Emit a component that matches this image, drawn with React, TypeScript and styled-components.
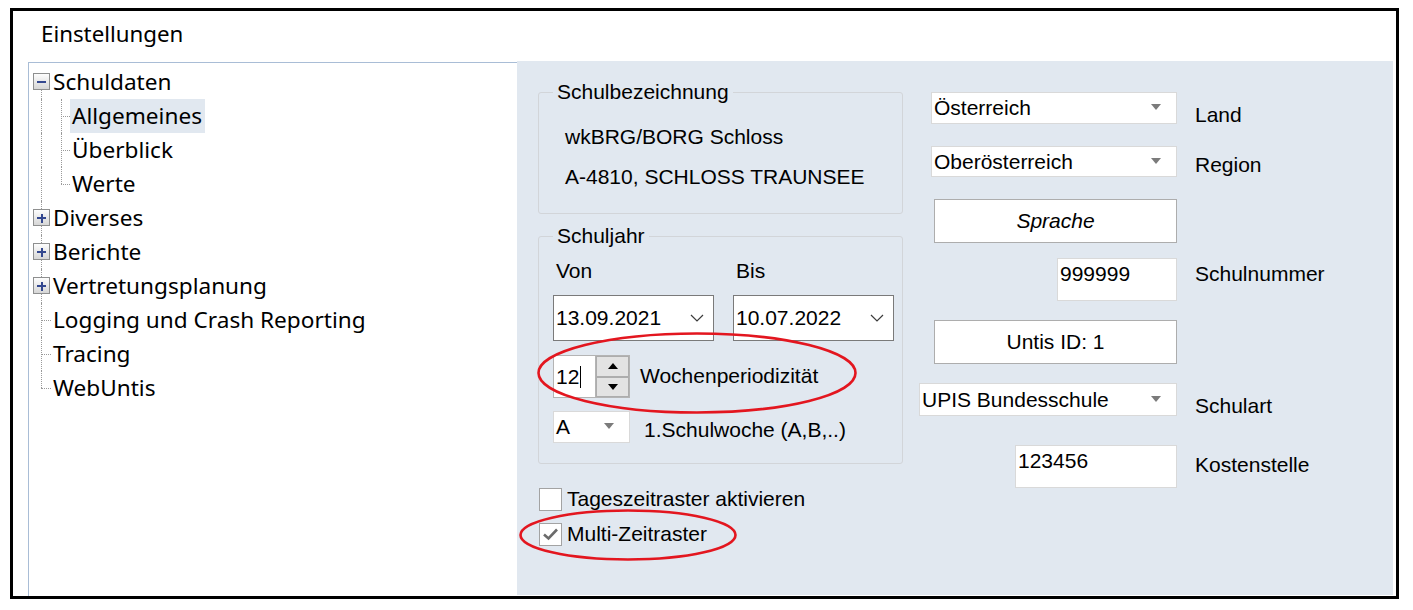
import React from "react";
import styled, { createGlobalStyle } from "styled-components";

const GlobalStyle = createGlobalStyle`
  html, body { margin: 0; padding: 0; background: #fff; }
  body { font-family: "Liberation Sans", Arial, sans-serif; }
`;

const Frame = styled.div`
  box-sizing: border-box;
  margin: 8px 0 0 10px;
  width: 1389px;
  height: 591px;
  border: 3px solid #000;
  display: flex;
  flex-direction: column;
  background: #fff;
`;

const Header = styled.div`
  height: 50px;
  padding: 11px 0 0 28px;
  box-sizing: border-box;
  font-family: "Noto Sans", sans-serif;
  font-size: 22.3px;
  line-height: 24px;
  color: #000;
`;

const Body = styled.div`
  flex: 1;
  display: flex;
  padding-left: 15px;
  min-height: 0;
`;

/* ---------- Tree ---------- */
const Tree = styled.ul`
  list-style: none;
  margin: 1px 0 0 0;
  padding: 2px 0 0 0;
  width: 489px;
  box-sizing: border-box;
  border-left: 1px solid #a9bdd6;
  border-top: 1px solid #a9bdd6;
  font-family: "Noto Sans", sans-serif;
  font-size: 22.6px;
  color: #000;
`;

const TreeRow = styled.li`
  display: flex;
  height: 34px;
  align-items: stretch;
`;

const Guide = styled.span<{ $w: number; $x: number; $top?: boolean; $bottom?: boolean; $stub?: boolean }>`
  position: relative;
  flex: none;
  width: ${(p) => p.$w}px;
  display: flex;
  align-items: center;
  &::before {
    content: "";
    position: absolute;
    left: ${(p) => p.$x}px;
    top: ${(p) => (p.$top ? "0" : "17px")};
    bottom: ${(p) => (p.$bottom ? "0" : "17px")};
    border-left: 1px dotted #9a9a9a;
    display: ${(p) => (p.$top || p.$bottom ? "block" : "none")};
  }
  &::after {
    content: "";
    position: absolute;
    left: ${(p) => p.$x}px;
    right: 0;
    top: 17px;
    border-top: 1px dotted #9a9a9a;
    display: ${(p) => (p.$stub ? "block" : "none")};
  }
`;

const Expander = styled.span<{ $open?: boolean }>`
  position: relative;
  z-index: 1;
  box-sizing: border-box;
  width: 17px;
  height: 17px;
  margin-left: 4px;
  margin-top: -1px;
  border: 1px solid #8e8f8f;
  background: linear-gradient(#fdfdfd, #d6d6d6);
  display: flex;
  align-items: center;
  justify-content: center;
  &::before {
    content: "";
    width: 9px;
    height: 2px;
    background: #34488f;
  }
  &::after {
    content: "";
    position: absolute;
    left: 6.5px;
    top: 3.5px;
    width: 2px;
    height: 9px;
    background: #34488f;
    display: ${(p) => (p.$open ? "none" : "block")};
  }
`;

const NodeLabel = styled.span<{ $selected?: boolean }>`
  padding: 0 3px 0 2px;
  line-height: 34px;
  white-space: nowrap;
  background: ${(p) => (p.$selected ? "#e1e8f0" : "transparent")};
`;

/* ---------- Panel ---------- */
const Panel = styled.div`
  position: relative;
  flex: 1;
  margin: 0 3px 1px 0;
  background: #e1e8f0;
  display: flex;
  gap: 16px;
  padding: 20px 0 0 21px;
  font-family: "Liberation Sans", Arial, sans-serif;
  font-size: 21px;
  color: #000;
`;

const LeftCol = styled.div`
  width: 365px;
  display: flex;
  flex-direction: column;
`;

const Group = styled.fieldset<{ $mt?: number }>`
  margin: ${(p) => p.$mt ?? 0}px 0 0 0;
  padding: 0;
  border: 1px solid #d2d5d9;
  border-radius: 3px;
  min-width: 0;
`;

const Legend = styled.legend`
  margin-left: 14px;
  padding: 0 4px;
  line-height: 22px;
`;

const NameBlock = styled.div`
  padding: 14px 0 16px 26px;
`;

const NameLine = styled.div`
  line-height: 40px;
  white-space: nowrap;
`;

const YearBlock = styled.div`
  padding: 12px 9px 20px 14px;
  display: flex;
  flex-direction: column;
`;

const PairGrid = styled.div<{ $mt?: number }>`
  display: grid;
  grid-template-columns: 161px 161px;
  column-gap: 19px;
  margin-top: ${(p) => p.$mt ?? 0}px;
`;

const SmallLabel = styled.div`
  padding-left: 3px;
  line-height: 24px;
`;

const DateBox = styled.div`
  box-sizing: border-box;
  height: 46px;
  border: 1px solid #7a7a7a;
  background: #fff;
  display: flex;
  align-items: center;
  justify-content: space-between;
  padding: 0 9px 0 2px;
`;

const InlineRow = styled.div<{ $mt?: number; $gap: number }>`
  display: flex;
  align-items: center;
  gap: ${(p) => p.$gap}px;
  margin-top: ${(p) => p.$mt ?? 0}px;
  white-space: nowrap;
`;

const RowText = styled.span<{ $dy: number }>`
  position: relative;
  top: ${(p) => p.$dy}px;
`;

const Spinner = styled.div`
  box-sizing: border-box;
  width: 77px;
  height: 43px;
  display: flex;
  border: 1px solid #b4b4b4;
  background: #fff;
`;

const SpinInput = styled.div`
  flex: 1;
  display: flex;
  align-items: center;
  padding-left: 2px;
  line-height: 24px;
`;

const Caret = styled.span`
  display: inline-block;
  width: 1px;
  height: 22px;
  margin-left: 1px;
  background: #000;
`;

const SpinButtons = styled.div`
  width: 33px;
  display: flex;
  flex-direction: column;
  border-left: 1px solid #b4b4b4;
`;

const SpinButton = styled.div<{ $down?: boolean }>`
  flex: 1;
  box-sizing: border-box;
  border: 1px solid #adadad;
  background: #e3e3e3;
  display: flex;
  align-items: center;
  justify-content: center;
  &::before {
    content: "";
    border-left: 5px solid transparent;
    border-right: 5px solid transparent;
    ${(p) => (p.$down ? "border-top: 6px solid #000;" : "border-bottom: 6px solid #000;")}
  }
`;

const Combo = styled.div<{ $w: number; $h: number }>`
  box-sizing: border-box;
  width: ${(p) => p.$w}px;
  height: ${(p) => p.$h}px;
  border: 1px solid #d9d9d9;
  background: #fff;
  display: flex;
  align-items: center;
  justify-content: space-between;
  padding: 0 15px 0 2px;
  white-space: nowrap;
  &::after {
    content: "";
    border-left: 5px solid transparent;
    border-right: 5px solid transparent;
    border-top: 6px solid #7b7b7b;
    margin-top: -2px;
  }
`;

const CheckRow = styled.label<{ $mt: number }>`
  display: flex;
  align-items: center;
  gap: 5px;
  margin: ${(p) => p.$mt}px 0 0 1px;
  line-height: 24px;
  white-space: nowrap;
`;

const CheckBox = styled.span`
  box-sizing: border-box;
  width: 23px;
  height: 23px;
  border: 1px solid #a3a3a3;
  background: #fff;
  display: flex;
  align-items: center;
  justify-content: center;
`;

const RightCol = styled.div`
  margin-top: 11px;
  display: flex;
  flex-direction: column;
`;

const FormRow = styled.div<{ $mt: number; $h: number }>`
  display: flex;
  align-items: flex-start;
  height: ${(p) => p.$h}px;
  margin-top: ${(p) => p.$mt}px;
`;

const Slot = styled.div`
  width: 258px;
  display: flex;
  justify-content: flex-end;
`;

const SideLabel = styled.div<{ $pt: number }>`
  margin-left: 18px;
  line-height: 24px;
  padding-top: ${(p) => p.$pt}px;
  white-space: nowrap;
`;

const Button = styled.div<{ $italic?: boolean }>`
  box-sizing: border-box;
  width: 243px;
  height: 44px;
  border: 1px solid #adadad;
  background: #fff;
  display: flex;
  align-items: center;
  justify-content: center;
  font-style: ${(p) => (p.$italic ? "italic" : "normal")};
`;

const TextBox = styled.div<{ $w: number }>`
  box-sizing: border-box;
  width: ${(p) => p.$w}px;
  height: 43px;
  border: 1px solid #d9d9d9;
  background: #fff;
  padding: 3px 0 0 2px;
  line-height: 24px;
`;

const Annotation = styled.svg<{ $l: number; $t: number }>`
  position: absolute;
  left: ${(p) => p.$l}px;
  top: ${(p) => p.$t}px;
  overflow: visible;
  pointer-events: none;
`;

const Chevron = () => (
  <svg width="14" height="8" viewBox="0 0 14 8">
    <path d="M1 1 L7 7 L13 1" fill="none" stroke="#3c3c3c" strokeWidth="1.2" />
  </svg>
);

const Check = () => (
  <svg width="17" height="14" viewBox="0 0 17 14">
    <path d="M2 7.5 L6.5 11.5 L15 2.5" fill="none" stroke="#6b6b6b" strokeWidth="2.6" />
  </svg>
);

const Ellipse = ({ l, t, w, h }: { l: number; t: number; w: number; h: number }) => (
  <Annotation $l={l} $t={t} width={w} height={h} viewBox={`0 0 ${w} ${h}`}>
    <ellipse cx={w / 2} cy={h / 2} rx={w / 2 - 1.5} ry={h / 2 - 1.5} fill="none" stroke="#e3161f" strokeWidth="2.6" />
  </Annotation>
);

type RootItem = { label: string; expander?: "open" | "closed"; top: boolean; bottom: boolean };

const roots: RootItem[] = [
  { label: "Diverses", expander: "closed", top: true, bottom: true },
  { label: "Berichte", expander: "closed", top: true, bottom: true },
  { label: "Vertretungsplanung", expander: "closed", top: true, bottom: true },
  { label: "Logging und Crash Reporting", top: true, bottom: true },
  { label: "Tracing", top: true, bottom: true },
  { label: "WebUntis", top: true, bottom: false },
];

const children = ["Allgemeines", "Überblick", "Werte"];

export default function App() {
  return (
    <>
      <GlobalStyle />
      <Frame>
        <Header>Einstellungen</Header>
        <Body>
          <Tree>
            <TreeRow>
              <Guide $w={22} $x={12} $bottom>
                <Expander $open />
              </Guide>
              <NodeLabel>Schuldaten</NodeLabel>
            </TreeRow>
            {children.map((c, i) => (
              <TreeRow key={c}>
                <Guide $w={22} $x={12} $top $bottom />
                <Guide $w={19} $x={10} $top $bottom={i < children.length - 1} $stub />
                <NodeLabel $selected={i === 0}>{c}</NodeLabel>
              </TreeRow>
            ))}
            {roots.map((r) => (
              <TreeRow key={r.label}>
                <Guide $w={22} $x={12} $top={r.top} $bottom={r.bottom} $stub={!r.expander}>
                  {r.expander && <Expander $open={r.expander === "open"} />}
                </Guide>
                <NodeLabel>{r.label}</NodeLabel>
              </TreeRow>
            ))}
          </Tree>

          <Panel>
            <LeftCol>
              <Group>
                <Legend>Schulbezeichnung</Legend>
                <NameBlock>
                  <NameLine>wkBRG/BORG Schloss</NameLine>
                  <NameLine>A-4810, SCHLOSS TRAUNSEE</NameLine>
                </NameBlock>
              </Group>

              <Group $mt={11}>
                <Legend>Schuljahr</Legend>
                <YearBlock>
                  <PairGrid>
                    <SmallLabel>Von</SmallLabel>
                    <SmallLabel>Bis</SmallLabel>
                  </PairGrid>
                  <PairGrid $mt={12}>
                    <DateBox>
                      <span>13.09.2021</span>
                      <Chevron />
                    </DateBox>
                    <DateBox>
                      <span>10.07.2022</span>
                      <Chevron />
                    </DateBox>
                  </PairGrid>
                  <InlineRow $mt={14} $gap={10}>
                    <Spinner>
                      <SpinInput>
                        12
                        <Caret />
                      </SpinInput>
                      <SpinButtons>
                        <SpinButton />
                        <SpinButton $down />
                      </SpinButtons>
                    </Spinner>
                    <RowText $dy={-1}>Wochenperiodizität</RowText>
                  </InlineRow>
                  <InlineRow $mt={13} $gap={14}>
                    <Combo $w={77} $h={32}>A</Combo>
                    <RowText $dy={3}>1.Schulwoche (A,B,..)</RowText>
                  </InlineRow>
                </YearBlock>
              </Group>

              <CheckRow $mt={23}>
                <CheckBox />
                Tageszeitraster aktivieren
              </CheckRow>
              <CheckRow $mt={11}>
                <CheckBox>
                  <Check />
                </CheckBox>
                Multi-Zeitraster
              </CheckRow>
            </LeftCol>

            <RightCol>
              <FormRow $mt={0} $h={32}>
                <Slot>
                  <Combo $w={246} $h={32}>Österreich</Combo>
                </Slot>
                <SideLabel $pt={11}>Land</SideLabel>
              </FormRow>
              <FormRow $mt={22} $h={31}>
                <Slot>
                  <Combo $w={246} $h={31}>Oberösterreich</Combo>
                </Slot>
                <SideLabel $pt={7}>Region</SideLabel>
              </FormRow>
              <FormRow $mt={22} $h={44}>
                <Slot>
                  <Button $italic>Sprache</Button>
                </Slot>
              </FormRow>
              <FormRow $mt={15} $h={43}>
                <Slot>
                  <TextBox $w={120}>999999</TextBox>
                </Slot>
                <SideLabel $pt={4}>Schulnummer</SideLabel>
              </FormRow>
              <FormRow $mt={19} $h={43}>
                <Slot>
                  <Button>Untis ID: 1</Button>
                </Slot>
              </FormRow>
              <FormRow $mt={20} $h={33}>
                <Slot>
                  <Combo $w={258} $h={33}>UPIS Bundesschule</Combo>
                </Slot>
                <SideLabel $pt={11}>Schulart</SideLabel>
              </FormRow>
              <FormRow $mt={29} $h={43}>
                <Slot>
                  <TextBox $w={162}>123456</TextBox>
                </Slot>
                <SideLabel $pt={8}>Kostenstelle</SideLabel>
              </FormRow>
            </RightCol>

            <Ellipse l={20} t={271} w={320} h={82} />
            <Ellipse l={2} t={448} w={218} h={52} />
          </Panel>
        </Body>
      </Frame>
    </>
  );
}
